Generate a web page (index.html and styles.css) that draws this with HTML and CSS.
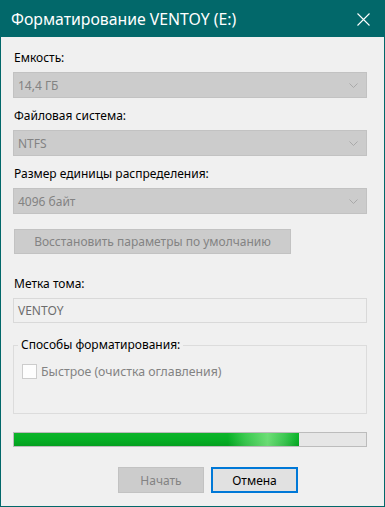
FILE: index.html
```html
<!DOCTYPE html>
<html lang="ru">
<head>
<meta charset="utf-8">
<title>Форматирование VENTOY (E:)</title>
<link rel="stylesheet" href="styles.css">
</head>
<body>
<div class="window">
  <div class="titlebar">
    <span class="title">Форматирование VENTOY (E:)</span>
    <svg class="close" width="13" height="13" viewBox="0 0 13 13"><path d="M0.5 0.5L12.5 12.5M12.5 0.5L0.5 12.5" stroke="#ffffff" stroke-width="1.1" fill="none"/></svg>
  </div>
  <div class="content">
    <div class="field">
      <div class="label">Емкость:</div>
      <div class="combo"><span>14,4 ГБ</span><svg class="chev" width="9" height="5" viewBox="0 0 9 5"><path d="M0.5 0.5L4.5 4.5L8.5 0.5" stroke="#a9a9a9" fill="none"/></svg></div>
    </div>
    <div class="field">
      <div class="label">Файловая система:</div>
      <div class="combo"><span>NTFS</span><svg class="chev" width="9" height="5" viewBox="0 0 9 5"><path d="M0.5 0.5L4.5 4.5L8.5 0.5" stroke="#a9a9a9" fill="none"/></svg></div>
    </div>
    <div class="field">
      <div class="label">Размер единицы распределения:</div>
      <div class="combo"><span>4096 байт</span><svg class="chev" width="9" height="5" viewBox="0 0 9 5"><path d="M0.5 0.5L4.5 4.5L8.5 0.5" stroke="#a9a9a9" fill="none"/></svg></div>
    </div>
    <div class="btn btn-disabled btn-restore">Восстановить параметры по умолчанию</div>
    <div class="label label-vol">Метка тома:</div>
    <div class="textbox">VENTOY</div>
    <fieldset class="group">
      <legend>Способы форматирования:</legend>
      <div class="check-row">
        <span class="checkbox"></span>
        <span class="check-label">Быстрое (очистка оглавления)</span>
      </div>
    </fieldset>
    <div class="progress"><div class="progress-fill" style="width: 285px"></div></div>
    <div class="buttons">
      <div class="btn btn-disabled btn-action">Начать</div>
      <div class="btn btn-default btn-action">Отмена</div>
    </div>
  </div>
</div>
</body>
</html>
```

FILE: styles.css
```css
* { box-sizing: border-box; }
html, body {
  margin: 0;
  padding: 0;
  width: 385px;
  height: 507px;
  overflow: hidden;
  background: #f0f0f0;
}
body {
  font-family: "Noto Sans", "Open Sans", sans-serif;
  font-size: 12px;
  color: #000;
}
.window {
  width: 385px;
  height: 507px;
  border: 1px solid #02686a;
  border-top: none;
  background: #f0f0f0;
  display: flex;
  flex-direction: column;
}
.titlebar {
  height: 37px;
  margin: 0 -1px;
  background: #02686a;
  display: flex;
  align-items: center;
  justify-content: space-between;
  padding: 0 15px 0 11px;
}
.title {
  color: #ffffff;
  font-size: 15.8px;
  line-height: 20px;
}
.close { display: block; margin-top: 1px; }
.content {
  padding: 11px 17px 0 12px;
  display: flex;
  flex-direction: column;
}
.label {
  line-height: 20px;
  margin-bottom: 4px;
  padding-left: 1px;
}
.field { margin-bottom: 8px; }
.combo {
  height: 26px;
  background: #cccccc;
  border: 1px solid #c2c2c2;
  color: #838383;
  display: flex;
  align-items: center;
  justify-content: space-between;
  padding: 0 8px 0 4px;
}
.btn {
  display: flex;
  align-items: center;
  justify-content: center;
}
.btn-disabled {
  background: #cccccc;
  border: 1px solid #c2c2c2;
  color: #838383;
}
.btn-restore {
  margin-top: 7px;
  margin-left: 1px;
  width: 277px;
  height: 25px;
}
.label-vol { margin-top: 20px; }
.textbox {
  height: 25px;
  border: 1px solid #d9d9d9;
  background: #f0f0f0;
  color: #6d6d6d;
  display: flex;
  align-items: center;
  padding-left: 4px;
}
.group {
  margin: 12px 0 0 0;
  padding: 0;
  border: 1px solid #dcdcdc;
  min-width: 0;
}
.group legend {
  margin-left: 4px;
  padding: 0 3px;
  line-height: 20px;
}
.check-row {
  display: flex;
  align-items: center;
  margin: 9px 0 34px 8px;
  height: 15px;
}
.checkbox {
  width: 15px;
  height: 15px;
  border: 1px solid #cccccc;
  background: #fdfdfd;
  margin-right: 4px;
}
.check-label { color: #838383; font-size: 12.3px; }
.progress {
  margin-top: 18px;
  height: 15px;
  border: 1px solid #bcbcbc;
  background: #e6e6e6;
}
.progress-fill {
  height: 100%;
  background:
    linear-gradient(to right,
      rgba(255,255,255,0) 0%,
      rgba(255,255,255,0) 75%,
      rgba(170,255,170,0.3) 81%,
      rgba(150,240,150,0.7) 89%,
      rgba(180,250,180,0.3) 95%,
      rgba(255,255,255,0) 100%),
    linear-gradient(to bottom, #0db42a 0%, #06b025 50%, #04a020 100%);
}
.buttons {
  display: flex;
  gap: 7px;
  margin-top: 20px;
  padding-left: 105px;
}
.btn-action {
  width: 86px;
  height: 26px;
}
.btn-default {
  background: #e1e1e1;
  border: 2px solid #0078d7;
  color: #000;
  width: 87px;
}
```
